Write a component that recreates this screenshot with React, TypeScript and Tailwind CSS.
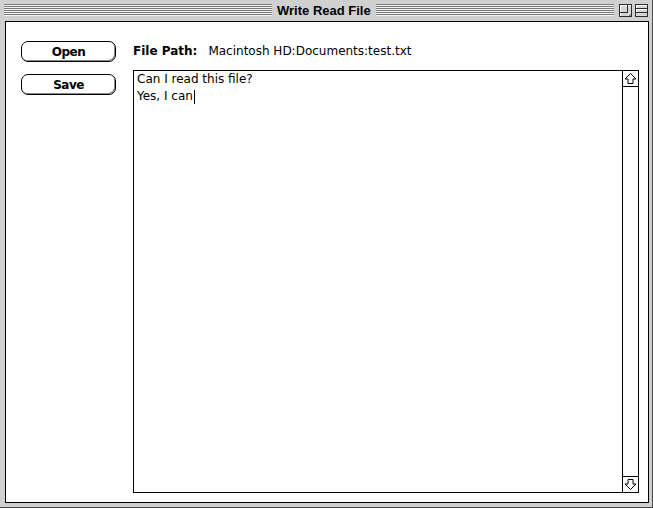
const Stripes = ({ className = "" }: { className?: string }) => (
  <div
    className={`h-[12px] bg-[repeating-linear-gradient(to_bottom,#7a7a7a_0px,#7a7a7a_1px,#f2f2f2_1px,#f2f2f2_2px)] ${className}`}
  />
);

const ZoomBox = () => (
  <svg width="13" height="13" viewBox="0 0 13 13" shapeRendering="crispEdges">
    <rect x="0.5" y="0.5" width="12" height="12" fill="#d6d6d6" stroke="#2b2b2b" />
    <path d="M1.5 11.5V1.5H11.5" stroke="#ffffff" fill="none" />
    <path d="M8.5 1V8.5H1" stroke="#2b2b2b" fill="none" />
    <path d="M9.5 11.5H11.5V9.5" stroke="#8a8a8a" fill="none" />
  </svg>
);

const CollapseBox = () => (
  <svg width="13" height="13" viewBox="0 0 13 13" shapeRendering="crispEdges">
    <rect x="0.5" y="0.5" width="12" height="12" fill="#d6d6d6" stroke="#2b2b2b" />
    <path d="M1.5 3.5V1.5H11.5" stroke="#ffffff" fill="none" />
    <path d="M1 4.5H12M1 8.5H12" stroke="#2b2b2b" fill="none" />
    <path d="M1.5 7.5V5.5H11.5" stroke="#ffffff" fill="none" />
  </svg>
);

const Arrow = ({ down = false }: { down?: boolean }) => (
  <svg width="15" height="15" viewBox="0 0 15 15" className={down ? "rotate-180" : ""}>
    <polygon
      points="7.5,2.5 13,8 10,8 10,12.5 5,12.5 5,8 2,8"
      fill="#ffffff"
      stroke="#000000"
      strokeWidth="1"
    />
  </svg>
);

const MacButton = ({ label }: { label: string }) => (
  <div className="w-[95px] h-[21px] rounded-[7px] border border-black bg-white shadow-[inset_-1px_-1px_0_#8a8a8a] flex items-center justify-center font-['DejaVu_Sans',sans-serif] font-bold text-[12px] tracking-[-0.5px] text-black">
    {label}
  </div>
);

export default function App() {
  return (
    <div className="w-[653px] h-[508px] bg-[#d0d0d0] border-r border-b border-[#4a4a4a] flex flex-col">
      {/* title bar */}
      <div className="h-[21px] flex items-start pt-[4px] pl-[4px] pr-[4px]">
        <Stripes className="w-[268px]" />
        <div className="px-[5px] -mt-[4px] h-[21px] flex items-center font-['Liberation_Sans',sans-serif] font-bold text-[13px] text-black leading-none">
          Write Read File
        </div>
        <Stripes className="flex-1" />
        <div className="ml-[5px]">
          <ZoomBox />
        </div>
        <div className="ml-[3px]">
          <CollapseBox />
        </div>
      </div>

      {/* window body */}
      <div className="flex-1 flex pl-[5px] pr-[3px] pb-[4px]">
        <div className="flex-1 border border-black bg-white flex pl-[15px] pt-[18px] pr-[9px] pb-[9px]">
          <div className="mt-[1px] flex flex-col gap-[12px]">
            <MacButton label="Open" />
            <MacButton label="Save" />
          </div>

          <div className="ml-[17px] flex-1 flex flex-col">
            <div className="h-[22px] flex items-center text-[12px] text-black">
              <span className="font-['DejaVu_Sans',sans-serif] font-bold">File Path:</span>
              <span className="ml-[11px] font-['DejaVu_Sans',sans-serif]">
                Macintosh HD:Documents:test.txt
              </span>
            </div>

            <div className="mt-[8px] flex-1 border border-black flex">
              <div className="flex-1 pl-[3px] font-['DejaVu_Sans',sans-serif] text-[12px] leading-[17px] text-black">
                <div>Can I read this file?</div>
                <div className="flex items-center">
                  Yes, I can
                  <span className="ml-[1px] inline-block w-[1px] h-[14px] bg-black" />
                </div>
              </div>
              <div className="w-[16px] border-l border-black flex flex-col">
                <div className="h-[16px] border-b border-black flex items-center justify-center">
                  <Arrow />
                </div>
                <div className="flex-1" />
                <div className="h-[16px] border-t border-black flex items-center justify-center">
                  <Arrow down />
                </div>
              </div>
            </div>
          </div>
        </div>
      </div>
    </div>
  );
}
